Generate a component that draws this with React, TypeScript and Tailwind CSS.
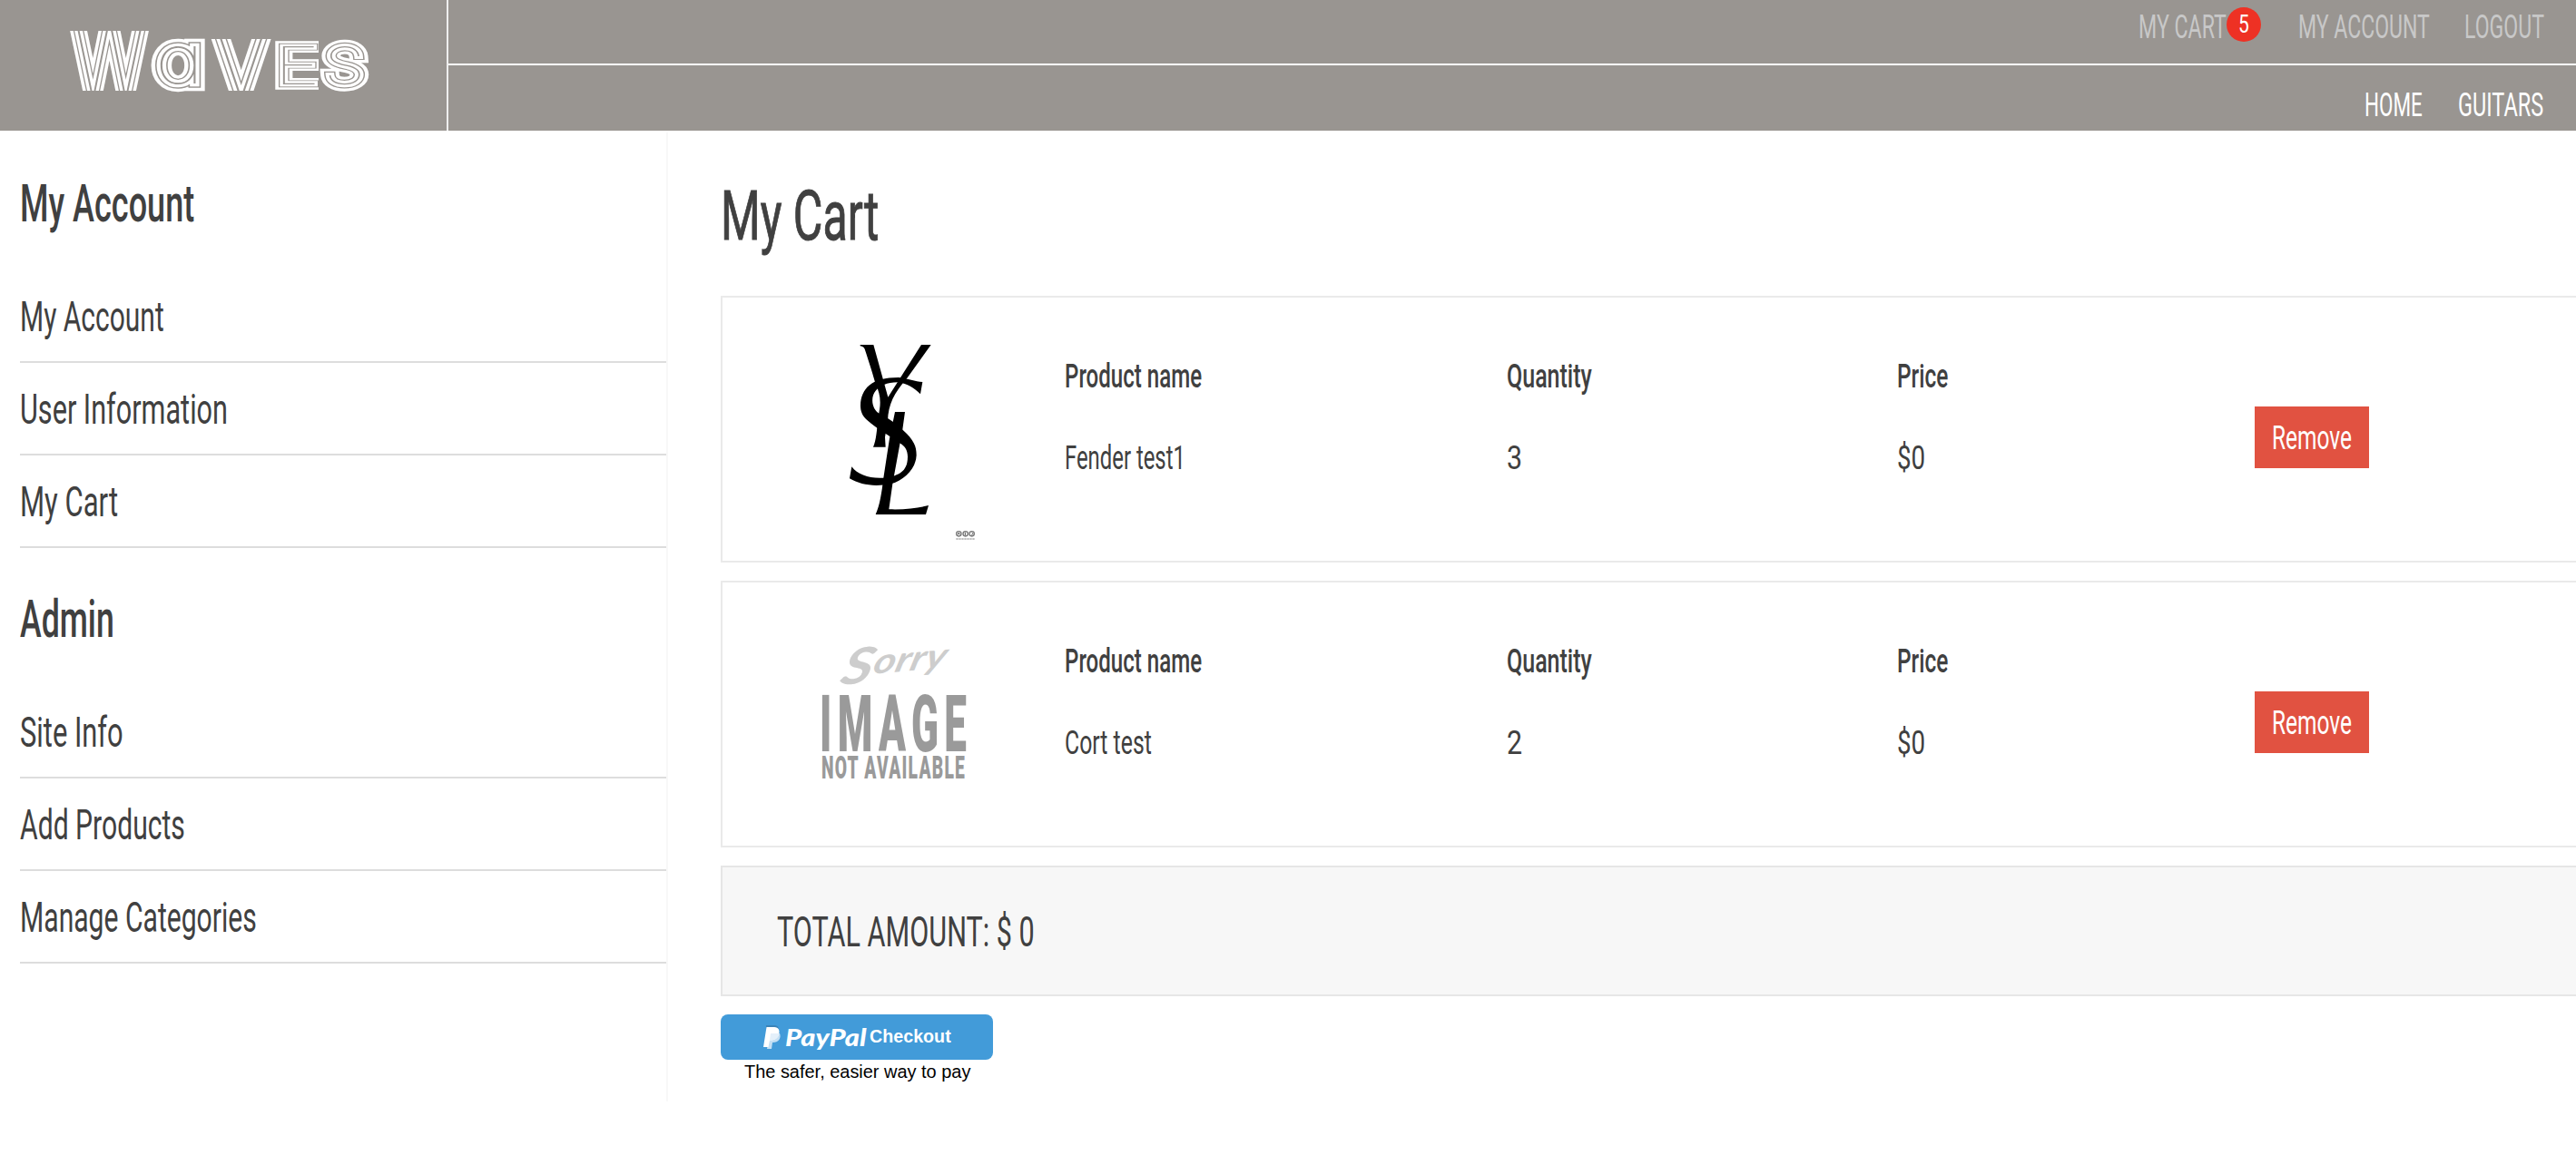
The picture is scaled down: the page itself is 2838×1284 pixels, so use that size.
import { useLayoutEffect, useRef, useState } from "react";

/* Text squeezed horizontally so that it fills exactly `w` pixels. */
function Fit({ w, className = "", children }: { w: number; className?: string; children: string }) {
  const ref = useRef<HTMLSpanElement>(null);
  const [scale, setScale] = useState(1);
  useLayoutEffect(() => {
    if (ref.current) setScale(w / ref.current.offsetWidth);
  }, [w, children]);
  return (
    <span className={`block shrink-0 whitespace-nowrap ${className}`} style={{ width: w }}>
      <span ref={ref} className="inline-block origin-left" style={{ transform: `scaleX(${scale})` }}>
        {children}
      </span>
    </span>
  );
}

const BAR = "#999591";

type LetterProps = { ch: string; x: number; y: number; size: number; sx: number; band: number };

/* One letter of the striped wordmark: stacked strokes of shrinking width. */
function Striped({ ch, x, y, size, sx, band }: LetterProps) {
  const layers: [number, string][] = [
    [band, "#fff"],
    [band * 0.57, BAR],
    [band * 0.41, "#fff"],
    [0, BAR],
  ];
  return (
    <g>
      {layers.map(([width, color], i) => (
        <text
          key={i}
          className="[font-feature-settings:'cv11']"
          transform={`translate(${x} ${y}) scale(${sx} 1)`}
          fontFamily="Inter, sans-serif"
          fontWeight={100}
          fontSize={size}
          fill={color}
          stroke={color}
          strokeWidth={width}
          vectorEffect="non-scaling-stroke"
          strokeLinejoin="miter"
          strokeMiterlimit={3}
        >
          {ch}
        </text>
      ))}
    </g>
  );
}

function WavesLogo() {
  return (
    <svg width="492" height="144" viewBox="0 0 492 144">
      <Striped ch="W" x={80.5} y={107} size={115} sx={0.75} band={19} />
      <Striped ch="V" x={236} y={108} size={103} sx={0.9} band={19} />
      <Striped ch="E" x={302} y={93} size={58} sx={1.5} band={14.5} />
      {/* flat ends of the straight letters */}
      <g fill={BAR}>
        <rect x="60" y="0" width="170" height="34" />
        <rect x="229" y="0" width="160" height="43" />
        <rect x="60" y="100" width="330" height="44" />
        <rect x="351" y="40" width="40" height="62" />
      </g>
      <Striped ch="a" x={171} y={92.3} size={74} sx={1.24} band={18.5} />
      <Striped ch="S" x={357} y={92.5} size={57} sx={1.3} band={17} />
    </svg>
  );
}

function Header() {
  const nav = "text-[36.5px] leading-[40px]";
  return (
    <header className="flex h-[144px] bg-[#999591]">
      <div className="w-[494px] shrink-0 border-r-2 border-[#eeeeee]">
        <WavesLogo />
      </div>
      <div className="flex grow flex-col">
        <nav className="flex h-[72px] items-start justify-end gap-[38px] border-b-2 border-white pt-[10px] pr-[35px] text-[#c8c8c8]">
          <div className="mr-[3px] flex">
            <Fit w={97} className={nav}>MY CART</Fit>
            <div className="-mt-[2px] flex size-[38px] justify-center rounded-full bg-[#ee3124] text-white">
              <Fit w={12} className="text-[28px] leading-[37px]">5</Fit>
            </div>
          </div>
          <Fit w={145} className={nav}>MY ACCOUNT</Fit>
          <Fit w={88} className={nav}>LOGOUT</Fit>
        </nav>
        <nav className="flex h-[72px] items-start justify-end gap-[39px] pt-[24px] pr-[36px] text-white">
          <Fit w={64} className={nav}>HOME</Fit>
          <Fit w={94} className={nav}>GUITARS</Fit>
        </nav>
      </div>
    </header>
  );
}

type Menu = { title: string; w: number; items: [string, number][] };

const MENUS: Menu[] = [
  { title: "My Account", w: 192, items: [["My Account", 159], ["User Information", 229], ["My Cart", 108]] },
  { title: "Admin", w: 104, items: [["Site Info", 114], ["Add Products", 182], ["Manage Categories", 261]] },
];

function Sidebar() {
  return (
    <aside className="mt-[2px] h-[1068px] w-[736px] shrink-0 border-r-2 border-[#f8f8f8] pl-[22px]">
      {MENUS.map((menu) => (
        <section key={menu.title}>
          <h2 className="flex h-[152px] items-center pt-[3px] text-[58px] leading-[80px] font-medium">
            <Fit w={menu.w}>{menu.title}</Fit>
          </h2>
          {menu.items.map(([label, w]) => (
            <div key={label} className="flex h-[102px] items-center border-b-2 border-[#dddddd] pt-[1px]">
              <Fit w={w} className="text-[46px] leading-[60px]">{label}</Fit>
            </div>
          ))}
        </section>
      ))}
    </aside>
  );
}

function Monogram() {
  return (
    <svg width="200" height="250" viewBox="0 0 600 750" className="mt-[32px] ml-[104px]">
      <path d="M143 60H187L235 233L345 60H377L298 170C255 220 236 255 234 312L225 365L227 398H186C196 375 198 345 202 300C214 250 210 225 194 190C180 140 165 95 160 80C157 68 152 66 143 64Z" />
      <path d="M349 183L342 223C320 203 300 188 268 184C230 184 208 196 194 212C177 232 180 272 207 288C240 305 265 322 285 343C320 375 329 395 329 425C327 470 290 507 245 520C190 530 145 524 108 502L115 463C135 490 175 503 220 500C270 494 300 480 300 430C300 408 290 393 272 384C240 360 200 340 165 308C150 294 144 280 144 260C146 205 180 168 270 168C300 172 325 182 349 183Z" />
      <path d="M258 282H291L283 340L250 520L238 604C290 606 335 600 369 591L360 621H194C208 590 214 550 220 500L240 370Z" />
      <g fill="none" stroke="#777" strokeWidth="4">
        <circle cx="469" cy="685" r="8" />
        <circle cx="491" cy="685" r="8" />
        <circle cx="512" cy="685" r="8" />
      </g>
      <path d="M466 688l3-7 3 7M490 680v10M512 681l4 4-5 5" fill="none" stroke="#555" strokeWidth="3" />
      <path d="M460 702h62" stroke="#aaa" strokeWidth="4" strokeDasharray="7 2" />
    </svg>
  );
}

function NoImage() {
  return (
    <svg width="200" height="250" viewBox="0 0 200 250" className="mt-[32px] ml-[104px]" fontFamily="Roboto, sans-serif">
      <text transform="translate(24 81) rotate(-5) skewX(-20) scale(1.22 1)" fontFamily="Lato, sans-serif" fontStyle="italic" fontWeight="700" fontSize="54" fill="#cdcdcd">
        S<tspan fontSize="38" dy="-9">orry</tspan>
      </text>
      <text transform="translate(3 154) scale(0.5 1)" textLength="324" lengthAdjust="spacing" fontWeight="900" fontSize="88" fill="#9a9a9a">IMAGE</text>
      <text transform="translate(5 184) scale(0.55 1)" textLength="287" lengthAdjust="spacing" fontWeight="900" fontSize="35" fill="#9a9a9a">NOT AVAILABLE</text>
    </svg>
  );
}

function Field({ label, lw, value, vw, className }: { label: string; lw: number; value: string; vw: number; className: string }) {
  return (
    <div className={`flex shrink-0 flex-col gap-[50px] pt-[66px] text-[37.5px] leading-[40px] ${className}`}>
      <Fit w={lw} className="font-medium">{label}</Fit>
      <Fit w={vw}>{value}</Fit>
    </div>
  );
}

function CartItem({ picture, name, nameWidth, quantity }: { picture: React.ReactNode; name: string; nameWidth: number; quantity: string }) {
  return (
    <div className="-mr-[2px] flex h-[294px] border-2 border-[#eaeaea]">
      <div className="w-[377px] shrink-0">{picture}</div>
      <Field label="Product name" lw={151} value={name} vw={nameWidth} className="w-[487px]" />
      <Field label="Quantity" lw={94} value={quantity} vw={17} className="w-[430px]" />
      <Field label="Price" lw={56} value="$0" vw={31} className="w-[394px]" />
      <button className="mt-[120px] flex h-[68px] w-[126px] justify-center bg-[#e15241] text-white">
        <Fit w={88} className="text-left text-[37px] leading-[69px]">Remove</Fit>
      </button>
    </div>
  );
}

function PayPalButton() {
  return (
    <div className="mt-[20px] w-[300px] font-['Liberation_Sans',sans-serif]">
      <button className="flex h-[50px] w-[300px] rounded-[8px] bg-[#429bd9] pl-[46px] text-white">
        <svg width="21" height="28" viewBox="0 0 21 28" className="mt-[12px]">
          <path d="M4 0H14C18 1 19 4 17 8L4 5Z" fill="#3a83b8" />
          <path d="M8 9H19C21 14 18 19 11 19L10 26H5Z" fill="#c5e0f4" />
          <path d="M4.5 2H13C18 2 19.500 6 18 10C16.500 15 13 16.500 8 16.500L6.500 24H1Z" fill="#fff" />
          <path d="M9 9H18.500C17.500 14 14 16.500 8 16.500Z" fill="#e4f0fa" />
        </svg>
        <Fit w={89} className="ml-[4px] text-left font-['Lato',sans-serif] text-[26px] leading-[50px] font-black italic">PayPal</Fit>
        <Fit w={90} className="ml-[4px] text-left text-[21px] leading-[48px] font-bold">Checkout</Fit>
      </button>
      <Fit w={249} className="ml-[26px] text-[20.5px] leading-[26px] text-black">The safer, easier way to pay</Fit>
    </div>
  );
}

export default function App() {
  return (
    <div className="h-[1284px] w-full overflow-hidden bg-white font-['Roboto',sans-serif] text-[#404040]">
      <Header />
      <div className="flex">
        <Sidebar />
        <main className="ml-[58px] grow">
          <h1 className="flex h-[182px] items-center pt-[6px] text-[76px] leading-[90px]">
            <Fit w={174} className="[-webkit-text-stroke:1px_#404040]">My Cart</Fit>
          </h1>
          <div className="flex flex-col gap-[20px]">
            <CartItem picture={<Monogram />} name="Fender test1" nameWidth={133} quantity="3" />
            <CartItem picture={<NoImage />} name="Cort test" nameWidth={96} quantity="2" />
            <div className="-mr-[2px] flex h-[144px] items-center border-2 border-[#e6e6e6] bg-[#f7f7f7] pt-[2px] pl-[60px]">
              <Fit w={284} className="text-[46px] leading-[60px]">TOTAL AMOUNT: $ 0</Fit>
            </div>
          </div>
          <PayPalButton />
        </main>
      </div>
    </div>
  );
}
